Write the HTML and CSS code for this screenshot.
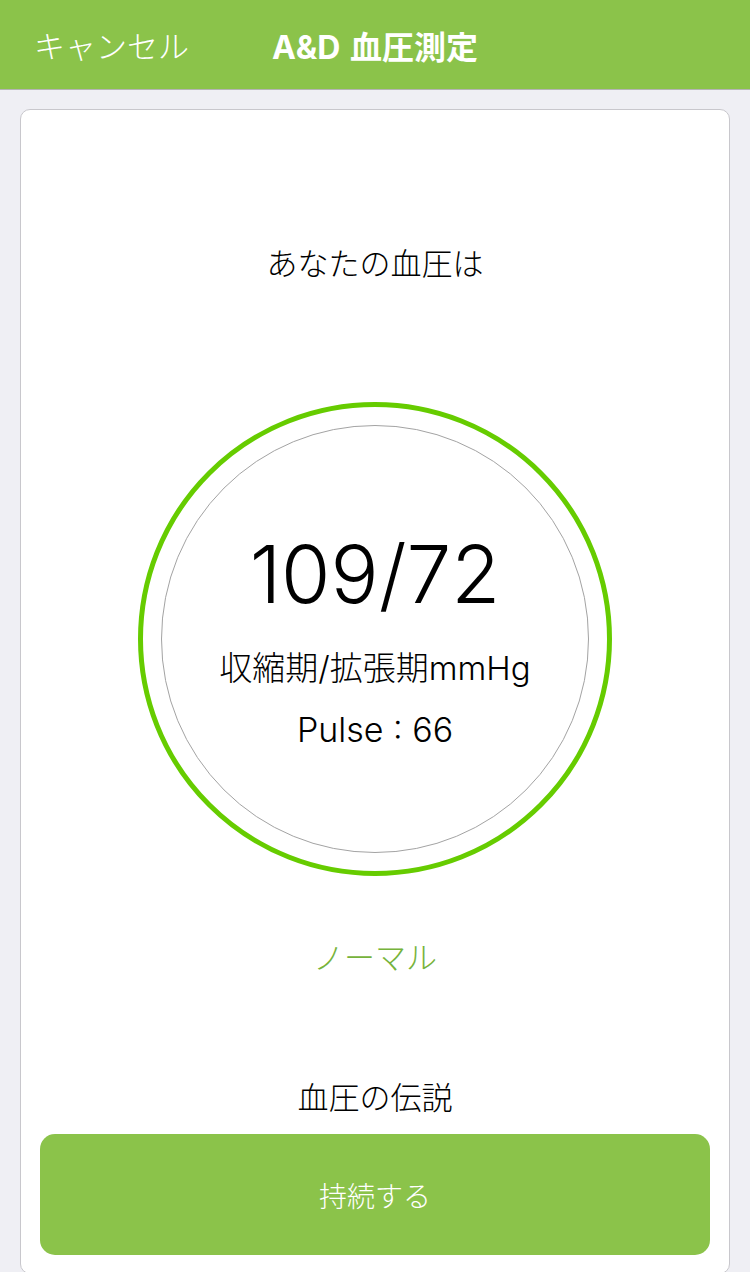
FILE: index.html
```html
<!DOCTYPE html>
<html lang="ja">
<head>
    <meta charset="UTF-8">
    <meta name="viewport" content="width=device-width, initial-scale=1.0">
    <title>A&amp;D 血圧測定</title>
    <link rel="stylesheet" href="styles.css">
</head>
<body>
    <header class="topbar">
        <a class="topbar-cancel" href="#">キャンセル</a>
        <h1 class="topbar-title">A&amp;D 血圧測定</h1>
        <span></span>
    </header>

    <main class="card">
        <p class="prompt">あなたの血圧は</p>

        <div class="gauge">
            <div class="gauge-inner">
                <div class="reading">109/72</div>
                <div class="unit">収縮期/拡張期mmHg</div>
                <div class="pulse">Pulse : 66</div>
            </div>
        </div>

        <p class="status">ノーマル</p>
        <p class="legend">血圧の伝説</p>

        <button type="button" class="continue">持続する</button>
    </main>
</body>
</html>
```

FILE: styles.css
```css
* {
    box-sizing: border-box;
}

body {
    margin: 0;
    height: 1272px;
    overflow: hidden;
    background: #efeff4;
    font-family: Inter, "Noto Sans CJK JP", sans-serif;
    color: #000;
}

.topbar {
    display: grid;
    grid-template-columns: 1fr auto 1fr;
    align-items: center;
    height: 90px;
    padding: 0 34px;
    background: #8bc34a;
    border-bottom: 1px solid #b4b4b4;
}

.topbar-cancel {
    color: #fff;
    text-decoration: none;
    font-family: "Noto Sans CJK JP", sans-serif;
    font-size: 31px;
    font-weight: 300;
}

.topbar-title {
    margin: 0;
    color: #fff;
    font-size: 32px;
    font-weight: 700;
    word-spacing: 2px;
}

.card {
    display: flex;
    flex-direction: column;
    align-items: center;
    height: 1165px;
    margin: 19px 20px 0;
    padding: 0 19px;
    background: #fff;
    border: 1px solid #c8c7cc;
    border-radius: 10px;
}

.prompt,
.status,
.legend {
    margin: 0;
    height: 40px;
    line-height: 40px;
    font-family: "Noto Sans CJK JP", sans-serif;
    font-size: 31px;
    font-weight: 300;
}

.prompt {
    margin-top: 132px;
}

.gauge {
    display: flex;
    align-items: center;
    justify-content: center;
    width: 474px;
    height: 474px;
    margin-top: 120px;
    border: 5px solid #66cc00;
    border-radius: 50%;
}

.gauge-inner {
    display: flex;
    flex-direction: column;
    align-items: center;
    justify-content: center;
    width: 428px;
    height: 428px;
    border: 1px solid #a3a3a3;
    border-radius: 50%;
}

.reading {
    height: 90px;
    line-height: 90px;
    font-size: 80px;
    font-weight: 300;
}

.unit {
    margin-top: 29px;
    line-height: 40px;
    font-size: 33px;
    font-weight: 300;
}

.pulse {
    margin-top: 22px;
    line-height: 40px;
    font-size: 34px;
    font-weight: 300;
}

.status {
    margin-top: 60px;
    color: #76b33b;
}

.legend {
    margin-top: 100px;
}

.continue {
    width: 100%;
    height: 121px;
    margin-top: 18px;
    border: 0;
    border-radius: 15px;
    background: #8bc34a;
    color: #fff;
    font-family: "Noto Sans CJK JP", sans-serif;
    font-size: 28px;
    font-weight: 300;
}
```
